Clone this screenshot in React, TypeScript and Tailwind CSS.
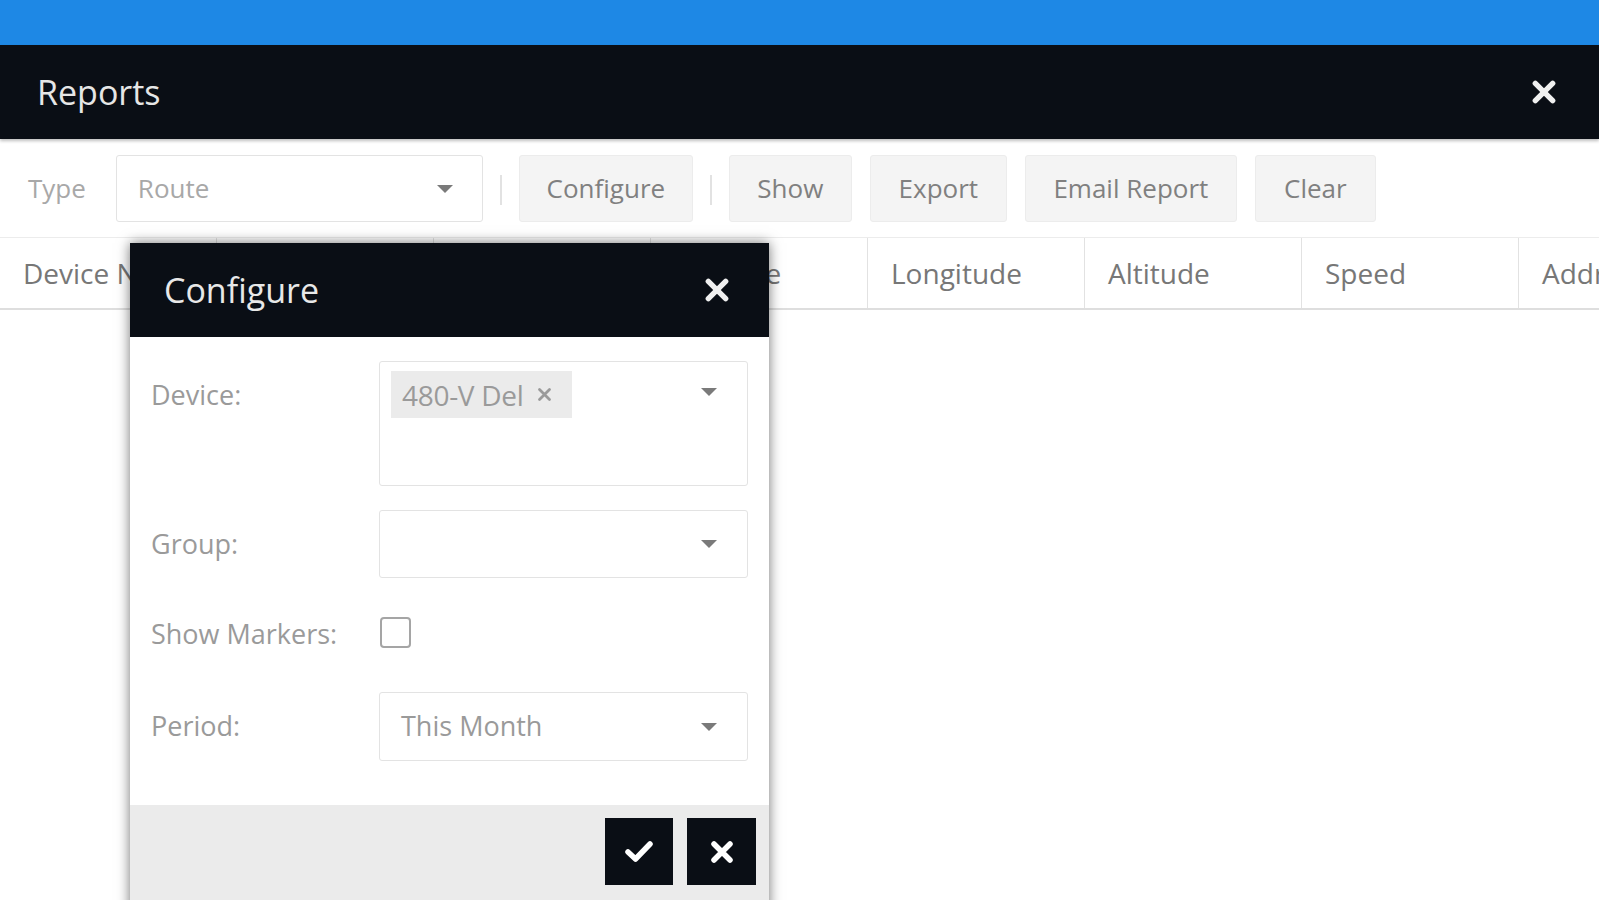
import React from "react";

const Caret = ({ className = "" }: { className?: string }) => (
  <svg className={className} width="18" height="10" viewBox="0 0 18 10">
    <path d="M1 1 L17 1 L9 9 Z" fill="#7a7a7a" />
  </svg>
);

const Times = ({ size = 22, color = "#fff", sw = 5 }: { size?: number; color?: string; sw?: number }) => (
  <svg width={size} height={size} viewBox="0 0 24 24">
    <path d="M4 4 L20 20 M20 4 L4 20" stroke={color} strokeWidth={sw} strokeLinecap="round" />
  </svg>
);

const Check = () => (
  <svg width="30" height="24" viewBox="0 0 30 24">
    <path d="M4 12 L11.5 19 L26 4" stroke="#fff" strokeWidth="5.5" strokeLinecap="round" strokeLinejoin="round" fill="none" />
  </svg>
);

const font = { fontFamily: '"Open Sans", "Noto Sans", sans-serif' };

export default function App() {
  const cols = ["Device Name", "Valid", "Time", "Latitude", "Longitude", "Altitude", "Speed", "Address"];
  return (
    <div className="relative w-[1599px] h-[900px] overflow-hidden bg-white" style={font}>
      <div className="h-[45px] bg-[#1e88e5]" />
      <div className="h-[94px] bg-[#0a0e15] flex items-center justify-between pl-[37px] pr-[42px] shadow-[0_2px_3px_rgba(0,0,0,0.25)] relative z-10">
        <span className="text-[34px] text-[#e6e6e6] leading-none">Reports</span>
        <Times size={26} color="#f0f0f0" sw={5} />
      </div>
      <div className="h-[99px] flex items-start pt-[16px] pl-[28px] border-b border-[#ececec]">
        <span className="text-[26px] text-[#a8a8a8] mr-[30px] h-[67px] flex items-center">Type</span>
        <div className="w-[367px] h-[67px] border border-[#e3e3e3] rounded-[3px] flex items-center justify-between pl-[21px] pr-[28px]">
          <span className="text-[26px] text-[#a8a8a8]">Route</span>
          <Caret />
        </div>
        <div className="w-[2px] h-[30px] bg-[#e2e2e2] mx-[17px] mt-[20px]" />
        <button className="w-[174px] h-[67px] bg-[#f4f4f4] border border-[#ececec] rounded-[3px] text-[26px] text-[#808080]">Configure</button>
        <div className="w-[2px] h-[30px] bg-[#e2e2e2] mx-[17px] mt-[20px]" />
        <div className="flex gap-[18px]">
          <button className="w-[123px] h-[67px] bg-[#f4f4f4] border border-[#ececec] rounded-[3px] text-[26px] text-[#808080]">Show</button>
          <button className="w-[137px] h-[67px] bg-[#f4f4f4] border border-[#ececec] rounded-[3px] text-[26px] text-[#808080]">Export</button>
          <button className="w-[212px] h-[67px] bg-[#f4f4f4] border border-[#ececec] rounded-[3px] text-[26px] text-[#808080]">Email Report</button>
          <button className="w-[121px] h-[67px] bg-[#f4f4f4] border border-[#ececec] rounded-[3px] text-[26px] text-[#808080]">Clear</button>
        </div>
      </div>
      <div className="h-[72px] flex border-b-2 border-[#dedede]">
        {cols.map((c, i) => (
          <div key={c} className={`w-[217px] shrink-0 flex items-center pl-[23px] ${i < cols.length - 1 ? "border-r border-[#e2e2e2]" : ""}`}>
            <span className="text-[28px] text-[#777] whitespace-nowrap">{c}</span>
          </div>
        ))}
      </div>

      <div className="absolute left-[130px] top-[243px] w-[639px] h-[680px] bg-white shadow-[0_0_12px_rgba(0,0,0,0.55)] flex flex-col">
        <div className="h-[94px] bg-[#0a0e15] flex items-center justify-between pl-[34px] pr-[39px]">
          <span className="text-[34px] text-[#e8e8e8]">Configure</span>
          <Times size={26} color="#f0f0f0" sw={5} />
        </div>
        <div className="px-[21px] pt-[24px] flex flex-col">
          <div className="flex">
            <div className="w-[228px] pt-[14px] text-[27px] text-[#9a9a9a]">Device:</div>
            <div className="w-[369px] h-[125px] border border-[#e3e3e3] rounded-[3px] relative pl-[11px] pt-[9px]">
              <div className="inline-flex items-center h-[47px] w-[181px] bg-[#ebebeb] pl-[11px] gap-[14px]">
                <span className="text-[28px] text-[#9a9a9a] tracking-[-0.3px]">480-V Del</span>
                <Times size={15} color="#9a9a9a" sw={4.5} />
              </div>
              <div className="absolute right-[29px] top-[25px]"><Caret /></div>
            </div>
          </div>
          <div className="flex items-center mt-[24px]">
            <div className="w-[228px] text-[27px] text-[#9a9a9a]">Group:</div>
            <div className="w-[369px] h-[68px] border border-[#e3e3e3] rounded-[3px] flex items-center justify-end pr-[29px]">
              <Caret />
            </div>
          </div>
          <div className="flex items-center h-[114px]">
            <div className="w-[229px] text-[27px] text-[#9a9a9a] pb-[2px]">Show Markers:</div>
            <div className="w-[31px] h-[31px] border-2 border-[#a5a5a5] rounded-[4px] mb-[6px]" />
          </div>
          <div className="flex items-center">
            <div className="w-[228px] text-[27px] text-[#9a9a9a]">Period:</div>
            <div className="w-[369px] h-[69px] border border-[#e3e3e3] rounded-[3px] flex items-center justify-between pl-[21px] pr-[29px]">
              <span className="text-[27px] text-[#9a9a9a]">This Month</span>
              <Caret />
            </div>
          </div>
        </div>
        <div className="mt-[44px] flex-1 bg-[#ebebeb] flex justify-end items-start gap-[14px] pt-[13px] pr-[13px]">
          <button className="w-[68px] h-[67px] bg-[#0a0e15] flex items-center justify-center"><Check /></button>
          <button className="w-[69px] h-[67px] bg-[#0a0e15] flex items-center justify-center"><Times size={24} color="#fff" sw={5.5} /></button>
        </div>
      </div>
    </div>
  );
}
